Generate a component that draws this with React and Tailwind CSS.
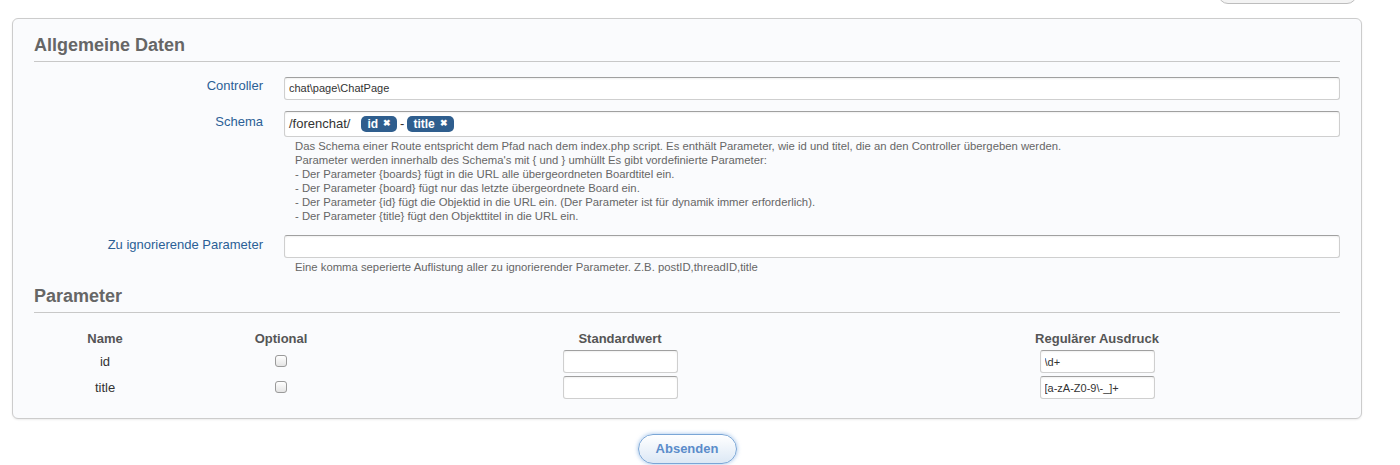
import React from 'react';

const HELP_SCHEMA = [
  'Das Schema einer Route entspricht dem Pfad nach dem index.php script. Es enthält Parameter, wie id und titel, die an den Controller übergeben werden.',
  "Parameter werden innerhalb des Schema's mit { und } umhüllt Es gibt vordefinierte Parameter:",
  '- Der Parameter {boards} fügt in die URL alle übergeordneten Boardtitel ein.',
  '- Der Parameter {board} fügt nur das letzte übergeordnete Board ein.',
  '- Der Parameter {id} fügt die Objektid in die URL ein. (Der Parameter ist für dynamik immer erforderlich).',
  '- Der Parameter {title} fügt den Objekttitel in die URL ein.',
];

const PARAMS = [
  { name: 'id', regex: '\\d+' },
  { name: 'title', regex: '[a-zA-Z0-9\\-_]+' },
];

const inputCls =
  'rounded-[3px] border border-[#cfcfcf] border-t-[#a0a0a0] bg-white text-[11px] text-[#333] outline-none shadow-[inset_0_1px_2px_rgba(0,0,0,0.06)]';

function Tag({ children }) {
  return (
    <span className="mx-[3px] inline-flex h-[16px] items-center gap-[5px] rounded-[5px] bg-[#2f5e8e] px-[6px] text-[12px] font-bold leading-none text-white">
      {children}
      <span className="text-[9px]">✖</span>
    </span>
  );
}

function Field({ label, children, help }) {
  return (
    <div className="flex">
      <label className="w-[229px] shrink-0 pt-[1px] text-right text-[13px] text-[#2b5f96]">{label}</label>
      <div className="ml-[21px] flex-1">
        {children}
        {help && <div className="mt-[2px] pl-[11px] text-[11.3px] leading-[14px] text-[#666]">{help}</div>}
      </div>
    </div>
  );
}

function SectionTitle({ children }) {
  return (
    <h2 className="border-b border-[#c8c8c8] pb-[4px] text-[18px] font-bold leading-[24px] text-[#666]">{children}</h2>
  );
}

export default function App() {
  return (
    <div className="min-h-[465px] bg-white font-['Liberation_Sans',Arial,sans-serif]">
      {/* bottom edge of a toolbar button above the form */}
      <div className="flex h-[4px] items-end justify-end overflow-hidden pr-[43px]">
        <div className="h-[30px] w-[139px] shrink-0 rounded-[10px] border border-[#bdbdbd] bg-[#f3f3f3]" />
      </div>

      <form className="mx-[12px] mt-[14px] w-[1350px]">
        <div className="rounded-[6px] border border-[#cccccc] bg-[#fafbfd] px-[21px] pt-[14px] pb-[17px] shadow-[0_1px_2px_rgba(0,0,0,0.08)]">
          <SectionTitle>Allgemeine Daten</SectionTitle>

          <div className="mt-[13px] flex flex-col gap-[11px]">
            <Field label="Controller">
              <input readOnly value="chat\page\ChatPage" className={`${inputCls} h-[23px] w-full px-[4px]`} />
            </Field>

            <Field label="Schema" help={HELP_SCHEMA.map((l) => <div key={l}>{l}</div>)}>
              <div className={`${inputCls} flex h-[26px] w-full items-center px-[4px] text-[13px]`}>
                <span className="mr-[8px]">/forenchat/</span>
                <Tag>id</Tag>
                <span>-</span>
                <Tag>title</Tag>
              </div>
            </Field>

            <Field
              label="Zu ignorierende Parameter"
              help="Eine komma seperierte Auflistung aller zu ignorierender Parameter. Z.B. postID,threadID,title"
            >
              <input readOnly className={`${inputCls} h-[23px] w-full px-[4px]`} />
            </Field>
          </div>

          <div className="mt-[10px]">
            <SectionTitle>Parameter</SectionTitle>
          </div>

          <table className="mt-[16px] w-full table-fixed border-collapse text-[13px]">
            <colgroup>
              <col className="w-[142px]" />
              <col className="w-[210px]" />
              <col className="w-[468px]" />
              <col />
            </colgroup>
            <thead>
              <tr className="h-[18px] font-bold text-[#555]">
                <th className="p-0 font-bold">Name</th>
                <th className="p-0 font-bold">Optional</th>
                <th className="p-0 font-bold">Standardwert</th>
                <th className="p-0 font-bold">Regulärer Ausdruck</th>
              </tr>
            </thead>
            <tbody>
              {PARAMS.map((p) => (
                <tr key={p.name} className="h-[26px] text-center text-[#333]">
                  <td className="p-0">{p.name}</td>
                  <td className="p-0">
                    <span className="inline-block h-[12px] w-[12px] translate-y-[1px] rounded-[3px] border border-[#9a9a9a] bg-gradient-to-b from-white to-[#e4e4e4]" />
                  </td>
                  <td className="p-0">
                    <input readOnly className={`${inputCls} h-[23px] w-[115px] px-[4px] align-middle`} />
                  </td>
                  <td className="p-0">
                    <input readOnly value={p.regex} className={`${inputCls} h-[23px] w-[115px] px-[4px] align-middle`} />
                  </td>
                </tr>
              ))}
            </tbody>
          </table>
        </div>

        <div className="mt-[15px] flex justify-center">
          <button
            type="submit"
            className="h-[30px] w-[99px] rounded-full border border-[#7aa6d6] bg-gradient-to-b from-white to-[#dce8f5] text-[13px] font-bold text-[#5a8cca] shadow-[0_0_4px_rgba(90,150,220,0.6)]"
          >
            Absenden
          </button>
        </div>
      </form>
    </div>
  );
}
